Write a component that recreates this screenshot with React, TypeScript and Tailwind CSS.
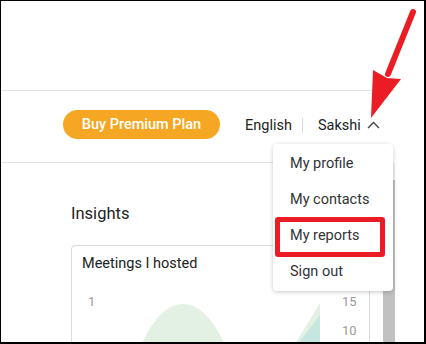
import React from "react";

export default function App() {
  const items = ["My profile", "My contacts", "My reports", "Sign out"];
  return (
    <div className="relative w-[426px] h-[344px] overflow-hidden bg-white border-l border-t border-r-2 border-b-2 border-black font-['Roboto',_sans-serif]">
      <div className="w-[394px]">
        <div className="h-[90px] border-b border-[#e2e2e2]" />
        <div className="w-[382px] h-[72px] border-b border-[#e2e2e2] flex items-start pl-[62px]">
          <button className="mt-[19px] h-[29px] w-[157px] rounded-full bg-[#f5a623] text-white text-[14.5px] font-medium leading-[29px]">
            Buy Premium Plan
          </button>
          <span className="mt-[25px] ml-[25px] text-[14.5px] leading-[20px] text-[#222]">English</span>
          <span className="mt-[27px] ml-[10px] w-px h-[15px] bg-[#dcdcdc]" />
          <span className="mt-[25px] ml-[15px] text-[14.5px] leading-[20px] text-[#222]">Sakshi</span>
          <svg className="mt-[30px] ml-[6px]" width="13" height="8" viewBox="0 0 13 8">
            <path d="M1 7 L6.5 1.5 L12 7" fill="none" stroke="#444" strokeWidth="1.4" />
          </svg>
        </div>
      </div>
      <div className="flex h-[200px]">
        <div className="w-[382px] pl-[70px]">
          <div className="mt-[39px] text-[16.5px] leading-[24px] text-[#222]">Insights</div>
          <div className="mt-[19px] w-[299px] h-[200px] border border-[#dcdcdc] rounded-[4px]">
            <div className="pt-[8px] pl-[10px] text-[14.5px] leading-[20px] text-[#222]">Meetings I hosted</div>
            <div className="relative h-[100px]">
              <svg className="absolute left-0 top-0" width="297" height="100" viewBox="0 0 297 100">
                <path d="M64 84 C90 12, 132 12, 158 84 Z" fill="#e3f1e4" />
                <polygon points="217,80 248,29 248,80" fill="#e3f1e4" />
                <polygon points="218,80 248,41 248,80" fill="#c6e7df" />
              </svg>
              <span className="absolute left-[16px] top-[19px] text-[13px] leading-[18px] text-[#9a9a9a]">1</span>
              <span className="absolute left-[270px] top-[19px] text-[13px] leading-[18px] text-[#9a9a9a]">15</span>
              <span className="absolute left-[270px] top-[48px] text-[13px] leading-[18px] text-[#9a9a9a]">10</span>
            </div>
          </div>
        </div>
        <div className="w-[12px] bg-[#f1f1f1] flex flex-col">
          <div className="mt-[17px] flex-1 bg-[#c1c1c1]" />
        </div>
      </div>

      <div className="absolute left-[272px] top-[143px] w-[120px] h-[147px] bg-white rounded-[4px] shadow-[0_1px_4px_rgba(0,0,0,0.22)] pt-[2px]">
        {items.map((t) => (
          <div key={t} className="h-[36px] flex items-center pl-[17px] text-[14.5px] text-[#333]">
            {t}
          </div>
        ))}
      </div>

      <div className="absolute left-[274px] top-[216px] w-[110px] h-[40px] border-[5px] border-[#ec1c24] rounded-[3px]" />

      <svg className="absolute left-[-1px] top-[-1px] pointer-events-none" width="426" height="344" viewBox="0 0 426 344">
        <line x1="413" y1="12" x2="388" y2="74" stroke="#ec1c24" strokeWidth="6" strokeLinecap="round" />
        <polygon points="371,118 373,70 387,78 401,79" fill="#ec1c24" />
      </svg>
    </div>
  );
}
